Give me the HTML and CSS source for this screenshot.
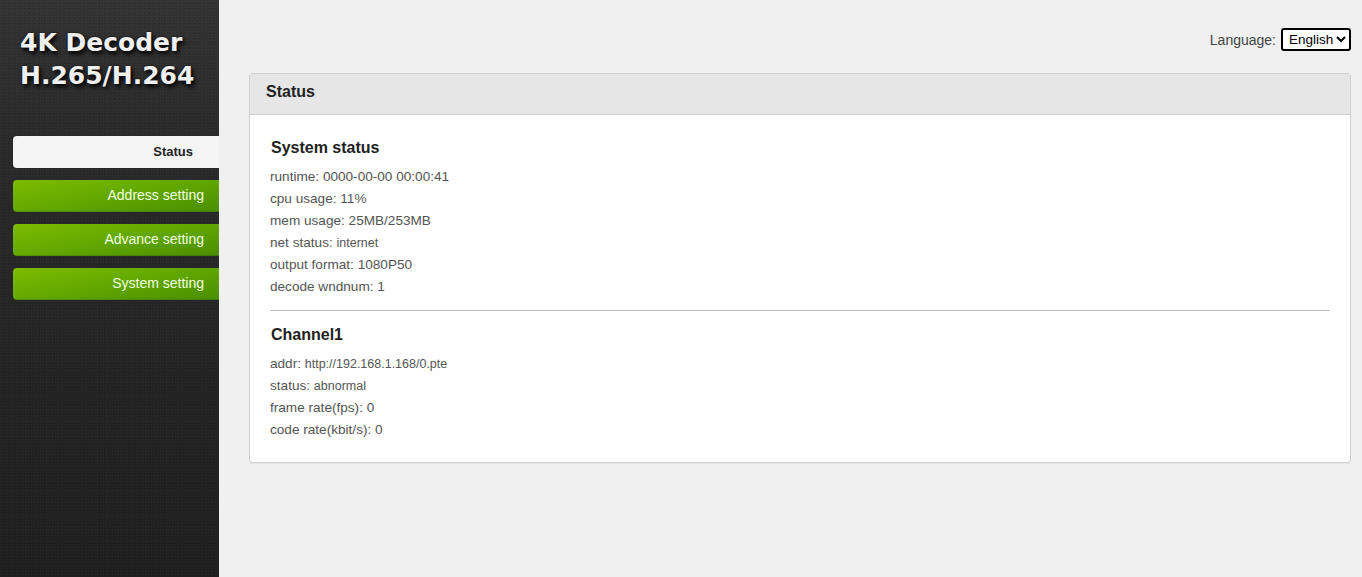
FILE: index.html
```html
<!DOCTYPE html>
<html>
<head>
<meta charset="utf-8">
<link rel="stylesheet" href="styles.css">
</head>
<body>
<div class="page">
  <aside class="sidebar">
    <div class="logo">4K Decoder<br>H.265/H.264</div>
    <nav class="nav">
      <a class="nav-item active">Status</a>
      <a class="nav-item">Address setting</a>
      <a class="nav-item">Advance setting</a>
      <a class="nav-item">System setting</a>
    </nav>
  </aside>
  <main class="main">
    <div class="lang">
      <span class="lang-label">Language:</span>
      <select class="lang-select"><option>English</option></select>
    </div>
    <section class="panel">
      <div class="panel-head">Status</div>
      <div class="panel-body">
        <h3 class="sec-title">System status</h3>
        <div class="row">runtime: 0000-00-00 00:00:41</div>
        <div class="row">cpu usage: 11%</div>
        <div class="row">mem usage: 25MB/253MB</div>
        <div class="row">net status: <span class="small">internet</span></div>
        <div class="row">output format: 1080P50</div>
        <div class="row">decode wndnum: 1</div>
        <hr class="divider">
        <h3 class="sec-title">Channel1</h3>
        <div class="row">addr: <span class="small">http://192.168.1.168/0.pte</span></div>
        <div class="row">status: <span class="small">abnormal</span></div>
        <div class="row">frame rate(fps): 0</div>
        <div class="row">code rate(kbit/s): 0</div>
      </div>
    </section>
  </main>
</div>
</body>
</html>
```
FILE: styles.css
```css
html, body { margin: 0; padding: 0; height: 100%; }
body { font-family: "Liberation Sans", Arial, sans-serif; background: #f0f0f0; }
.page { display: flex; height: 577px; }
.sidebar {
  width: 219px;
  flex-shrink: 0;
  background-color: #262626;
  background-image:
    radial-gradient(rgba(255,255,255,0.035) 0.8px, transparent 1px),
    radial-gradient(rgba(0,0,0,0.18) 0.8px, transparent 1px),
    linear-gradient(180deg, #333 0%, #2a2a2a 25%, #232323 70%, #1f1f1f 100%);
  background-size: 3px 3px, 5px 5px, 100% 100%;
  background-position: 0 0, 2px 1px, 0 0;
  display: flex;
  flex-direction: column;
}
.logo {
  font-family: "DejaVu Sans", Verdana, sans-serif;
  font-weight: bold;
  font-size: 25px;
  line-height: 33px;
  color: #f0f0f0;
  text-shadow: 2px 3px 4px #000, 0 0 2px rgba(0,0,0,0.8);
  padding: 26px 0 0 20px;
}
.nav { display: flex; flex-direction: column; gap: 12px; padding: 44px 0 0 13px; }
.nav-item {
  display: block;
  height: 32px;
  line-height: 31px;
  border-radius: 4px 0 0 4px;
  text-align: right;
  font-size: 14px;
  padding-right: 15px;
  color: #f2ffe0;
  background: linear-gradient(170deg, #7cbc00 0%, #64aa00 45%, #4a8e00 100%);
  box-shadow: inset 0 -1px 0 rgba(0,0,0,0.15);
}
.nav-item.active {
  background: #f5f5f5;
  color: #222;
  font-weight: bold;
  font-size: 13px;
  padding-right: 26px;
  box-shadow: none;
}
.main { flex: 1; padding: 28px 11px 0 30px; display: flex; flex-direction: column; }
.lang { display: flex; justify-content: flex-end; align-items: center; gap: 5px; height: 23px; }
.lang-label { font-size: 14px; color: #444; }
.lang-select {
  font-family: "Liberation Sans", Arial, sans-serif;
  font-size: 13.5px;
  height: 23px;
  width: 70px;
  border: 2px solid #000;
  border-radius: 3px;
  background: #fff;
  color: #000;
  padding: 0 0 0 2px;
}
.panel {
  margin-top: 22px;
  background: #fff;
  border: 1px solid #d0d0d0;
  border-radius: 3px;
  box-shadow: 0 1px 1px rgba(0,0,0,0.05);
}
.panel-head {
  height: 40px;
  line-height: 36px;
  background: #e6e6e6;
  border-bottom: 1px solid #cfcfcf;
  border-radius: 3px 3px 0 0;
  font-weight: bold;
  font-size: 16px;
  color: #222;
  padding-left: 16px;
}
.panel-body { padding: 23px 20px 21px 20px; }
.sec-title { margin: 0 0 8px 1px; font-size: 16px; font-weight: bold; color: #222; line-height: 20px; }
.row { font-size: 13.6px; color: #555; line-height: 22px; height: 22px; }
.small { font-size: 12.5px; line-height: 1; }
.divider { border: 0; border-top: 1px solid #bbb; margin: 12px 0 14px 0; }
```
